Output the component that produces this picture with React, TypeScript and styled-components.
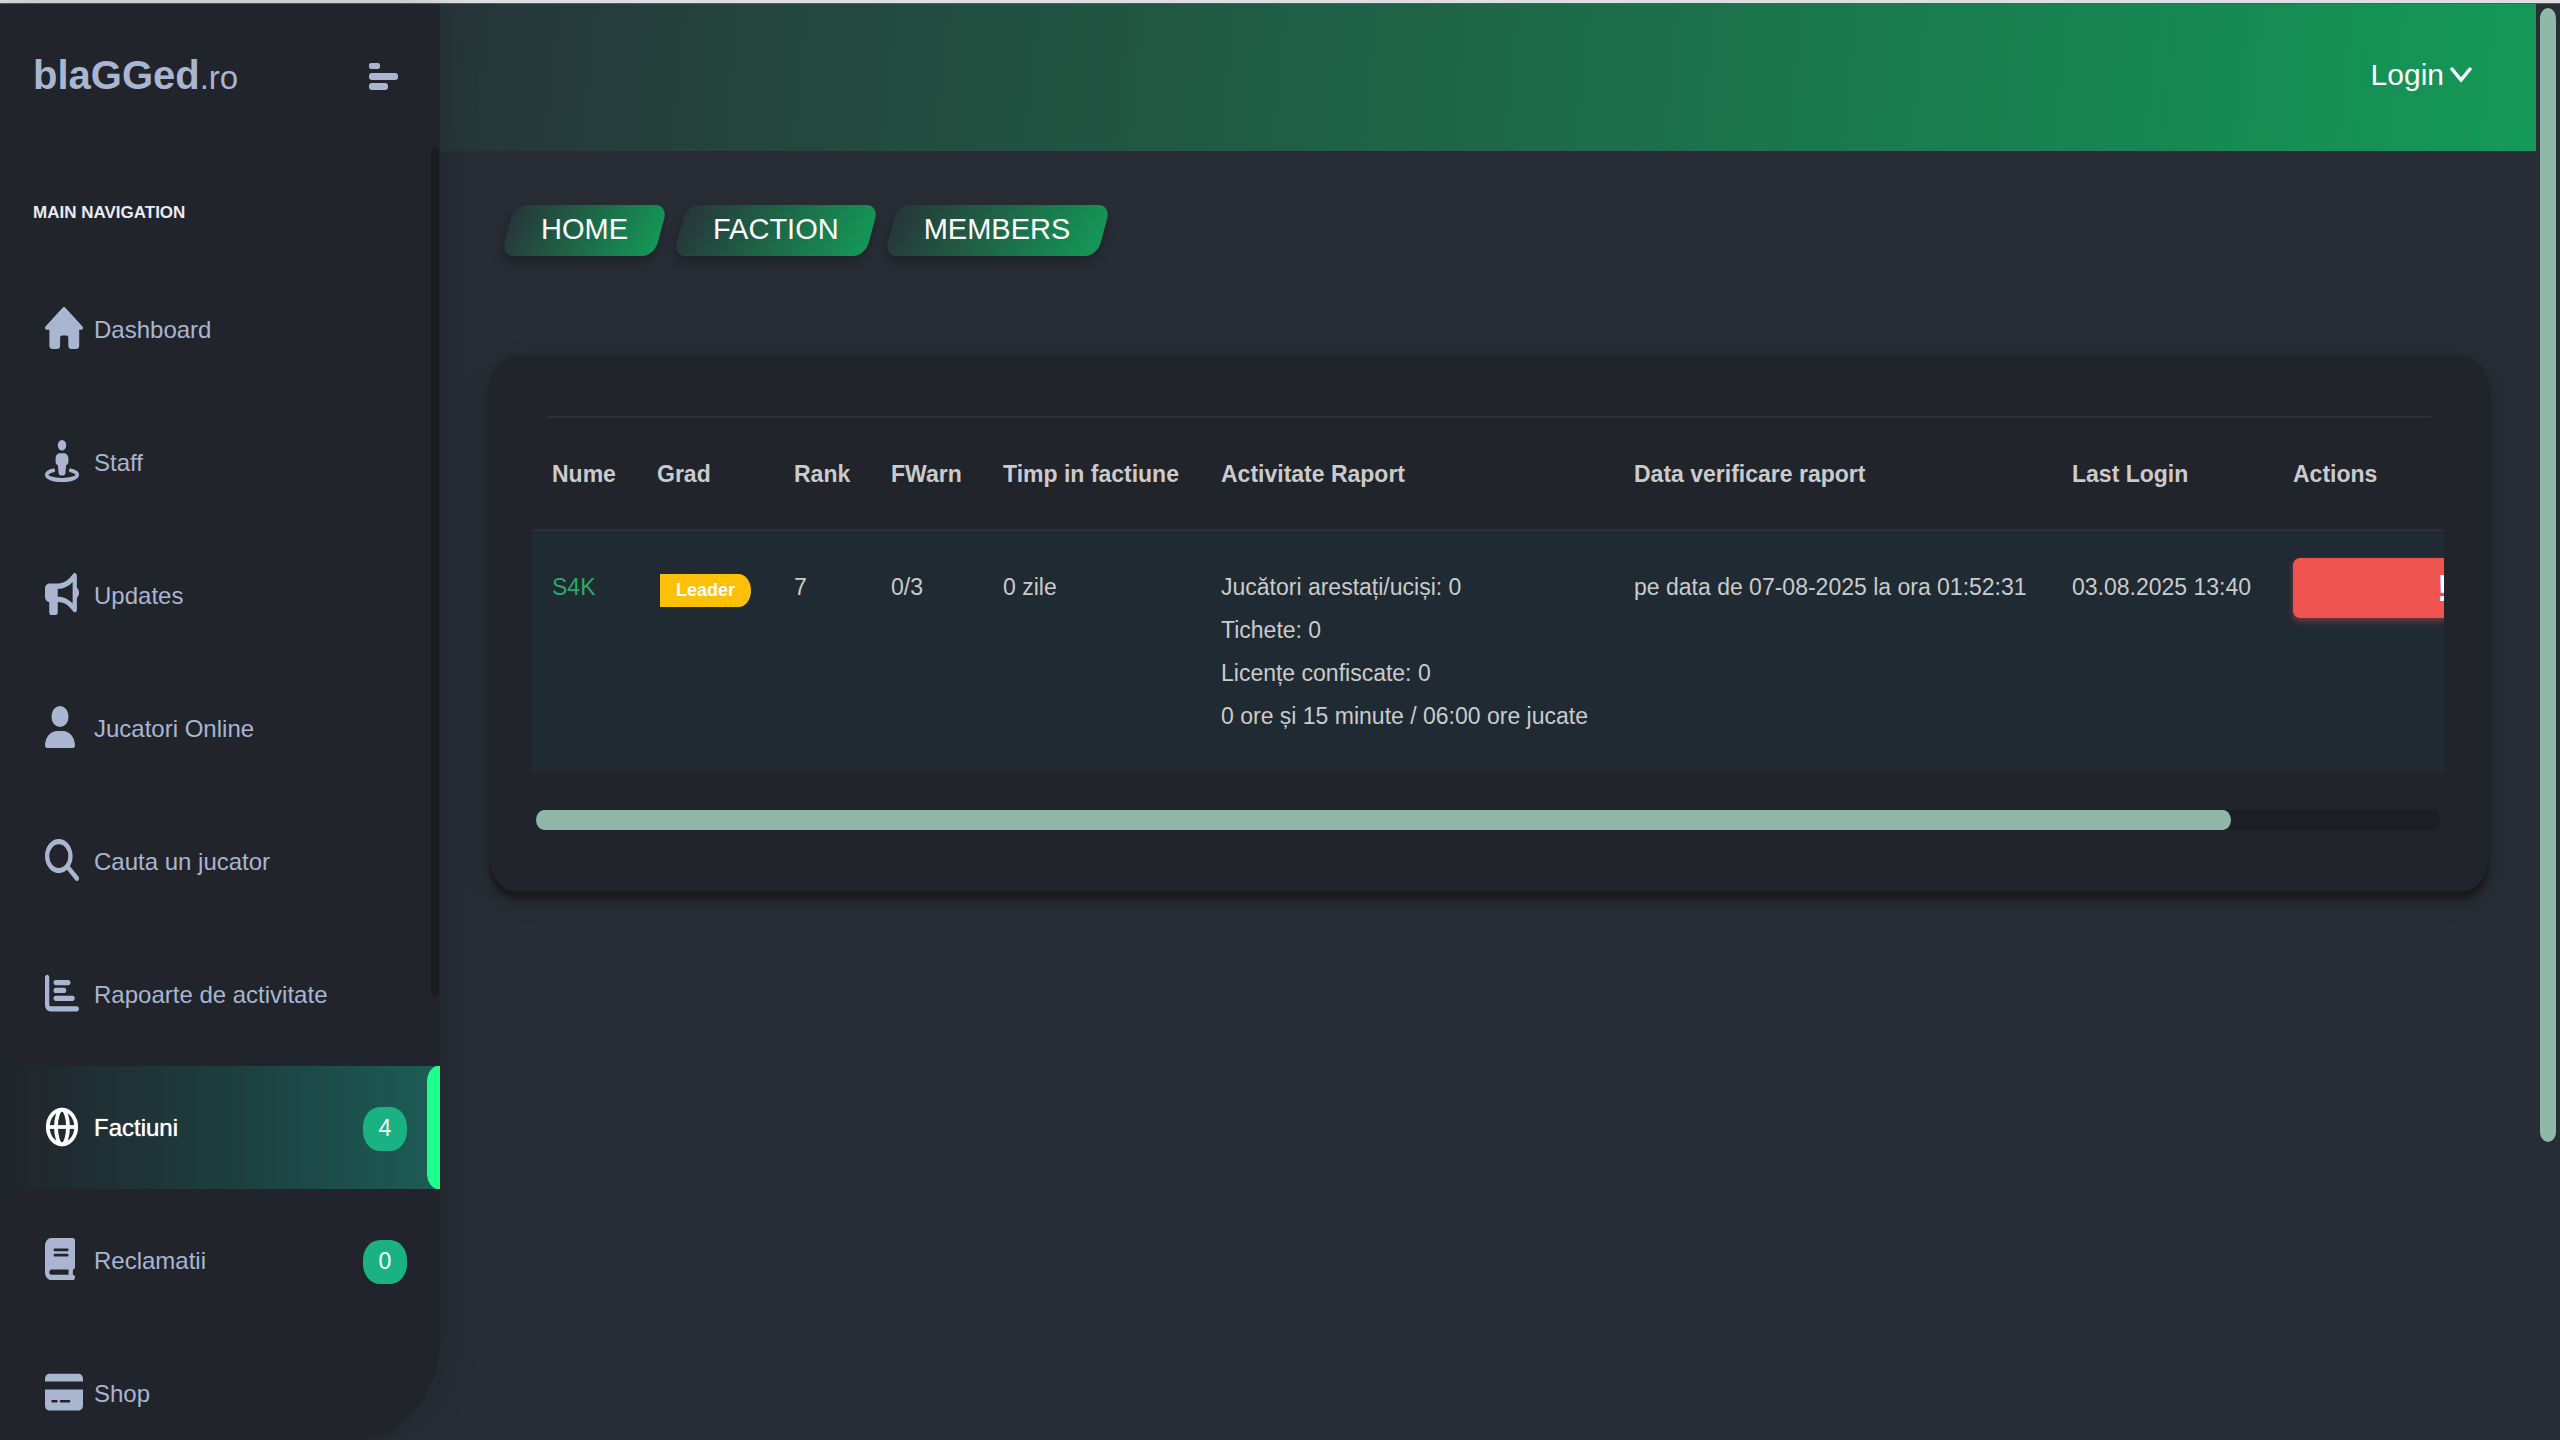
import React from "react";
import styled, { createGlobalStyle, css } from "styled-components";
import {
  FaBook,
  FaBullhorn,
  FaChartBar,
  FaCreditCard,
  FaMagnifyingGlass,
  FaStreetView,
  FaUser,
} from "react-icons/fa6";

const color = {
  page: "#282c35",
  panel: "#21242b",
  accent: "#1bb283",
  scroll: "#8fb8a8",
  muted: "#a9b5d1",
  text: "#cbcbcb",
};

const fade = (angle: number) => `linear-gradient(${angle}deg, #273538 0%, #149958 100%)`;

const GlobalStyle = createGlobalStyle`
  * { box-sizing: border-box; }
  html, body { margin: 0; background: ${color.page}; }
  body {
    overflow: hidden;
    color: ${color.text};
    font-family: "Liberation Sans", Arial, sans-serif;
    font-size: 23px;
    line-height: 43px;
  }
  a { color: inherit; text-decoration: none; }
  button { font: inherit; border: 0; padding: 0; cursor: pointer; }
`;

const Shell = styled.div`
  height: 100vh;
  display: flex;
  flex-direction: column;
  overflow: hidden;
`;

const TopEdge = styled.div`
  flex: none;
  height: 4px;
  background: #dedee3;
  border-bottom: 1px solid #555860;
`;

const Columns = styled.div`
  flex: 1;
  min-height: 0;
  display: grid;
  grid-template-columns: 440px minmax(0, 1fr) 24px;
`;

const Sidebar = styled.aside`
  position: relative;
  z-index: 1;
  min-height: 0;
  overflow: hidden;
  background: ${color.panel};
  border-radius: 0 0 84px 0 / 0 0 104px 0;
  box-shadow: 0 0 40px rgba(0, 0, 0, 0.16);
`;

const Brand = styled.div`
  height: 144px;
  padding: 0 42px 0 33px;
  display: flex;
  align-items: center;
  justify-content: space-between;
  color: ${color.muted};
`;

const Logo = styled.a`
  font-size: 33px;
  line-height: 56px;

  strong { font-size: 40px; }
`;

const MenuButton = styled.button`
  display: flex;
  background: none;
  color: inherit;
`;

const NavTitle = styled.h2`
  margin: 0;
  padding: 43px 33px 34px;
  font-size: 17px;
  color: #e9ebf5;
`;

const NavList = styled.ul`
  margin: 0;
  padding: 0;
  list-style: none;
  display: flex;
  flex-direction: column;
  gap: 10px;
`;

const NavLink = styled.a<{ $active?: boolean }>`
  position: relative;
  height: 123px;
  padding: 0 33px 0 45px;
  display: flex;
  align-items: center;
  gap: 11px;
  color: ${color.muted};
  font-size: 24px;

  ${(p) =>
    p.$active &&
    css`
      color: #fff;
      text-shadow: 0 0 1px #fff;
      background: linear-gradient(90deg, ${color.panel} 0%, #1d3f40 55%, #1c5d55 100%);

      &::after {
        content: "";
        position: absolute;
        inset: 0 0 0 auto;
        width: 13px;
        background: #1eff8e;
        border-radius: 11px 0 0 11px / 16px 0 0 16px;
      }
    `}
`;

const IconSlot = styled.span<{ $width: number }>`
  flex: 0 0 38px;
  margin-bottom: 4px;
  display: flex;

  svg {
    width: ${(p) => p.$width}px;
    height: 42px;
  }
`;

const Count = styled.span`
  margin: 2px 0 0 auto;
  width: 44px;
  height: 44px;
  border-radius: 17px / 20px;
  background: ${color.accent};
  color: #fff;
  font-size: 23px;
  line-height: 42px;
  text-align: center;
  text-shadow: none;
`;

const SideThumb = styled.div`
  position: absolute;
  top: 144px;
  right: 1px;
  width: 8px;
  height: 848px;
  border-radius: 4px;
  background: #1b1c20;
`;

const Main = styled.main`
  min-width: 0;
`;

const TopBar = styled.header`
  height: 147px;
  padding: 0 64px 6px;
  display: flex;
  align-items: center;
  justify-content: flex-end;
  background: ${fade(96)};
`;

const LoginButton = styled.button`
  display: flex;
  align-items: center;
  gap: 6px;
  background: none;
  color: #fff;
  font-size: 30px;
  line-height: 44px;
`;

const Content = styled.div`
  padding: 54px 48px 0 50px;
`;

const Crumbs = styled.nav`
  display: flex;
  gap: 19px;
  padding-left: 18px;
`;

const Crumb = styled.a`
  position: relative;
  z-index: 0;
  padding: 0 33px 2px;
  color: #fff;
  font-size: 29px;
  line-height: 49px;

  &::before {
    content: "";
    position: absolute;
    inset: 0;
    z-index: -1;
    background: ${fade(105)};
    border-radius: 12px / 14px;
    box-shadow: 0 6px 10px rgba(0, 0, 0, 0.25);
    transform: skewX(-15deg);
  }
`;

const Card = styled.section`
  margin-top: 100px;
  padding: 60px 44px 61px 42px;
  background: ${color.panel};
  border-radius: 26px / 32px;
  box-shadow: 0 8px 4px #191a1d, 0 8px 24px rgba(0, 0, 0, 0.2);
`;

const Rule = styled.hr`
  margin: 0 13px 0 15px;
  border: 0;
  height: 2px;
  background: #2d303a;
`;

const TableScroll = styled.div`
  overflow: hidden;
`;

const Table = styled.table`
  width: 2150px;
  table-layout: fixed;
  border-collapse: collapse;
  white-space: nowrap;

  th, td {
    padding: 35px 0 34px 20px;
    text-align: left;
    vertical-align: top;
  }

  th { padding-bottom: 33px; }

  thead { border-bottom: 2px solid #2d303a; }
  tbody tr { background: #1f2a33; }
`;

const Column = styled.col<{ $width: number }>`
  width: ${(p) => p.$width}px;
`;

const Player = styled.a`
  color: #2fa866;
`;

const Rank = styled.span`
  display: block;
  width: max-content;
  margin: 8px 0 0 3px;
  padding: 0 16px;
  background: #ffc107;
  border-radius: 0 13px 13px 0 / 0 17px 17px 0;
  color: #fff;
  font-size: 18px;
  font-weight: bold;
  line-height: 33px;
`;

const ActionCell = styled.td`
  && { padding-top: 27px; padding-bottom: 0; }
`;

const WarnButton = styled.button`
  display: block;
  width: 369px;
  height: 60px;
  padding: 0 144px;
  border-radius: 7px;
  background: #ef5350;
  box-shadow: 0 3px 6px rgba(239, 83, 80, 0.4);
  color: #fff;
  font-size: 36px;
  font-weight: bold;
  text-align: left;
`;

const Track = styled.div`
  height: 20px;
  margin: 38px 4px 0;
  border-radius: 8px / 10px;
  background: #1c1e26;
`;

const Thumb = styled.div`
  width: 89%;
  height: 100%;
  border-radius: inherit;
  background: ${color.scroll};
`;

const PageRail = styled.div`
  padding: 4px;
`;

const PageThumb = styled.div`
  height: 79.4%;
  border-radius: 8px / 10px;
  background: ${color.scroll};
`;

const HouseIcon = () => (
  <svg viewBox="0 0 38 42" preserveAspectRatio="none" fill="currentColor" aria-hidden="true">
    <path d="M17.6.7a1.900 2.200 0 0 1 2.800 0L37.500 19.600c1 1.400.400 3.200-1.300 3.200H34.200V38.500a3.300 3.500 0 0 1-3.300 3.500H26.600a3.300 3.500 0 0 1-3.300-3.500V30.500a1.800 2 0 0 0-1.800-2H16.900a1.800 2 0 0 0-1.800 2V38.500a3.300 3.500 0 0 1-3.300 3.500H7.700a3.300 3.500 0 0 1-3.300-3.500V22.800H1.800C.1 22.800-.5 21 .5 19.600Z" />
  </svg>
);

const GlobeIcon = () => (
  <svg
    viewBox="0 0 34 42"
    preserveAspectRatio="none"
    fill="none"
    stroke="currentColor"
    strokeWidth="3.800"
    aria-hidden="true"
  >
    <ellipse cx="17" cy="22" rx="14.200" ry="17.400" />
    <ellipse cx="17" cy="22" rx="6" ry="17.400" />
    <path d="M2.600 22h28.800" />
  </svg>
);

const stretch = { preserveAspectRatio: "none", "aria-hidden": true } as const;

const navItems = [
  { label: "Dashboard", icon: <HouseIcon />, width: 38 },
  { label: "Staff", icon: <FaStreetView {...stretch} />, width: 34 },
  { label: "Updates", icon: <FaBullhorn {...stretch} />, width: 34 },
  { label: "Jucatori Online", icon: <FaUser {...stretch} />, width: 30 },
  { label: "Cauta un jucator", icon: <FaMagnifyingGlass {...stretch} />, width: 34 },
  { label: "Rapoarte de activitate", icon: <FaChartBar {...stretch} />, width: 34 },
  { label: "Factiuni", icon: <GlobeIcon />, width: 34, count: 4, active: true },
  { label: "Reclamatii", icon: <FaBook {...stretch} />, width: 30, count: 0 },
  { label: "Shop", icon: <FaCreditCard {...stretch} />, width: 38 },
];

const columns = [
  { title: "Nume", width: 105 },
  { title: "Grad", width: 137 },
  { title: "Rank", width: 97 },
  { title: "FWarn", width: 112 },
  { title: "Timp in factiune", width: 218 },
  { title: "Activitate Raport", width: 413 },
  { title: "Data verificare raport", width: 438 },
  { title: "Last Login", width: 221 },
  { title: "Actions", width: 409 },
];

export default function App() {
  return (
    <>
      <GlobalStyle />
      <Shell>
        <TopEdge />
        <Columns>
          <Sidebar>
            <Brand>
              <Logo href="#">
                <strong>blaGGed</strong>.ro
              </Logo>
              <MenuButton aria-label="Toggle menu">
                <svg width="29" height="27" viewBox="0 0 29 27" fill="currentColor" aria-hidden="true">
                  <rect width="11" height="6" rx="2" />
                  <rect y="10" width="29" height="7" rx="3" />
                  <rect y="20" width="19" height="7" rx="3" />
                </svg>
              </MenuButton>
            </Brand>
            <NavTitle>MAIN NAVIGATION</NavTitle>
            <NavList>
              {navItems.map((item) => (
                <li key={item.label}>
                  <NavLink href="#" $active={item.active}>
                    <IconSlot $width={item.width}>{item.icon}</IconSlot>
                    {item.label}
                    {item.count !== undefined && <Count>{item.count}</Count>}
                  </NavLink>
                </li>
              ))}
            </NavList>
            <SideThumb />
          </Sidebar>

          <Main>
            <TopBar>
              <LoginButton>
                Login
                <svg width="22" height="18" viewBox="0 0 22 18" fill="none" stroke="currentColor" strokeWidth="3.500" strokeLinecap="round" aria-hidden="true">
                  <path d="M2 3l9 11 9-11" />
                </svg>
              </LoginButton>
            </TopBar>
            <Content>
              <Crumbs>
                <Crumb href="#">HOME</Crumb>
                <Crumb href="#">FACTION</Crumb>
                <Crumb href="#">MEMBERS</Crumb>
              </Crumbs>
              <Card>
                <Rule />
                <TableScroll>
                  <Table>
                    <colgroup>
                      {columns.map((c) => (
                        <Column key={c.title} $width={c.width} />
                      ))}
                    </colgroup>
                    <thead>
                      <tr>
                        {columns.map((c) => (
                          <th key={c.title}>{c.title}</th>
                        ))}
                      </tr>
                    </thead>
                    <tbody>
                      <tr>
                        <td>
                          <Player href="#">S4K</Player>
                        </td>
                        <td>
                          <Rank>Leader</Rank>
                        </td>
                        <td>7</td>
                        <td>0/3</td>
                        <td>0 zile</td>
                        <td>
                          Jucători arestați/uciși: 0<br />
                          Tichete: 0<br />
                          Licențe confiscate: 0<br />0 ore și 15 minute / 06:00 ore jucate
                        </td>
                        <td>pe data de 07-08-2025 la ora 01:52:31</td>
                        <td>03.08.2025 13:40</td>
                        <ActionCell>
                          <WarnButton>!</WarnButton>
                        </ActionCell>
                      </tr>
                    </tbody>
                  </Table>
                </TableScroll>
                <Track>
                  <Thumb />
                </Track>
              </Card>
            </Content>
          </Main>

          <PageRail>
            <PageThumb />
          </PageRail>
        </Columns>
      </Shell>
    </>
  );
}
